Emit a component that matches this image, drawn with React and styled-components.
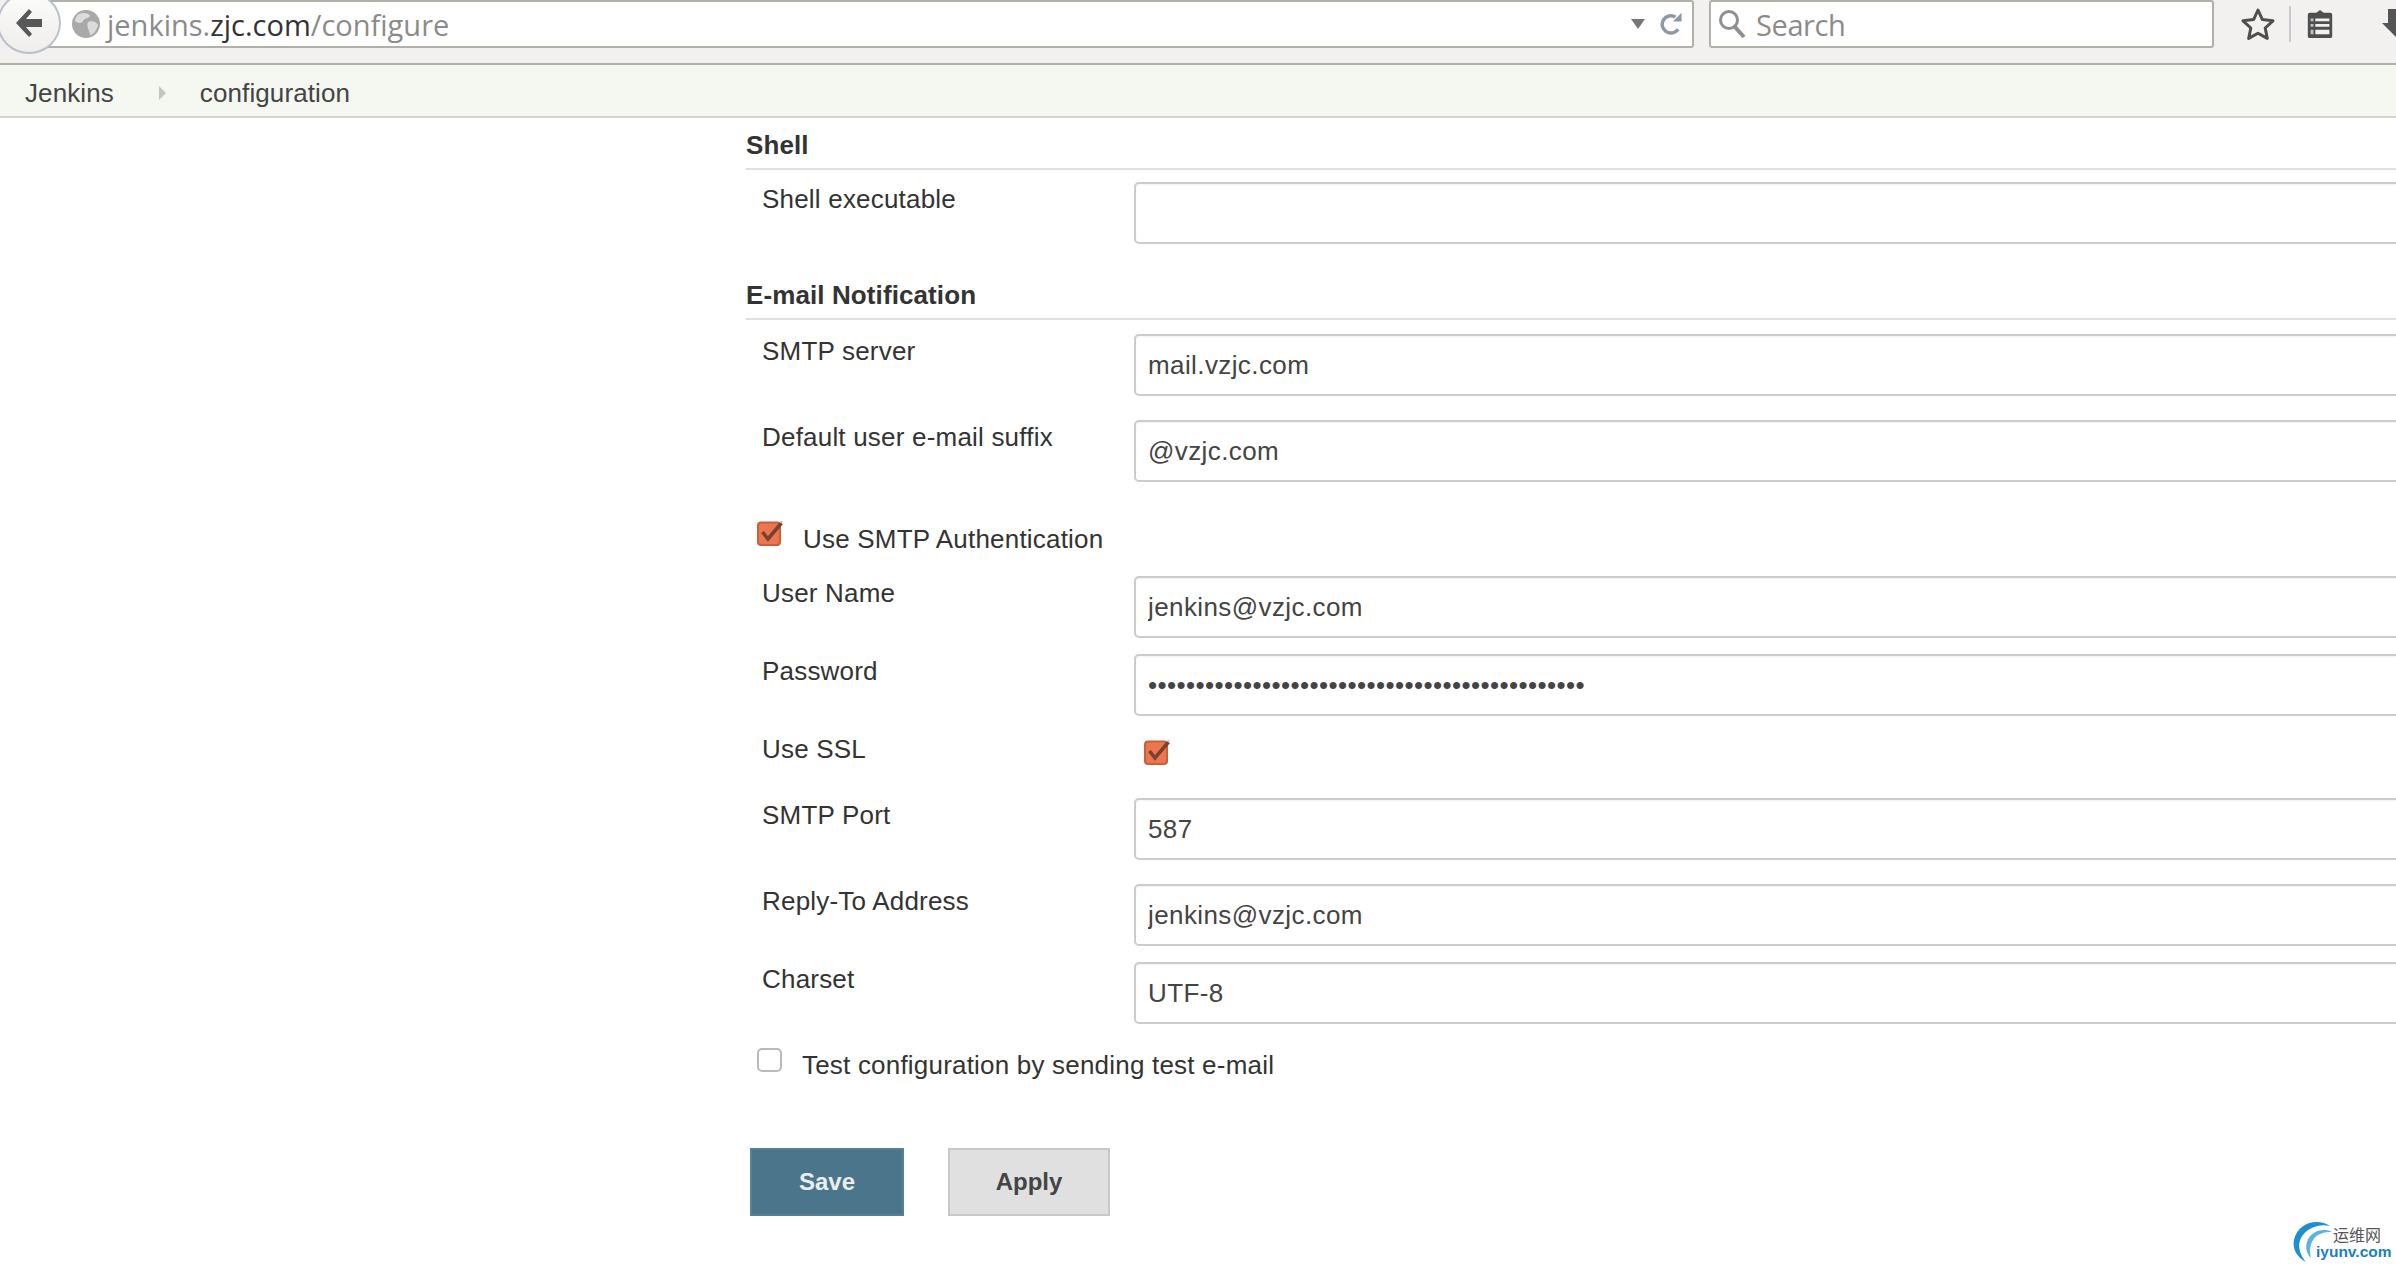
import React from "react"
import styled, { createGlobalStyle } from "styled-components"

const GlobalStyle = createGlobalStyle`
  html, body {
    margin: 0;
    padding: 0;
    background: #fff;
    overflow: hidden;
  }
  * { box-sizing: border-box; }
`

const Page = styled.div`
  position: relative;
  width: 2396px;
  height: 1268px;
  overflow: hidden;
  font-family: "Liberation Sans", Arial, sans-serif;
  font-size: 26px;
  letter-spacing: 0.2px;
  color: #333;
`

const Toolbar = styled.div`
  position: relative;
  display: flex;
  align-items: flex-start;
  height: 65px;
  padding-left: 30px;
  overflow: hidden;
  background: #f2f1ef;
  border-bottom: 2px solid #b3afa9;
`

const BackButton = styled.div`
  position: absolute;
  left: -3px;
  top: -8px;
  width: 64px;
  height: 62px;
  display: flex;
  align-items: center;
  justify-content: center;
  border-radius: 50%;
  background: linear-gradient(#fbfbfa, #efeeec);
  border: 2px solid #b9c1cc;
`

const Box = styled.div`
  display: flex;
  flex: none;
  align-items: center;
  height: 48px;
  background: #fff;
  border: 2px solid #b3afa9;
  border-radius: 0 3px 3px 0;
`

const UrlBar = styled(Box)`
  width: 1664px;
  padding: 0 8px 0 41px;
  border-left: none;
`

const SearchBar = styled(Box)`
  width: 505px;
  margin-left: 15px;
  padding-left: 7px;
  border-radius: 3px;
`

const BarText = styled.span`
  font-family: "Open Sans", "Noto Sans", sans-serif;
  font-size: 29px;
  letter-spacing: ${(p) => p.$spacing || 0}px;
  color: ${(p) => p.$color || "#8b8b8b"};
`

const UrlText = styled.div`
  flex: 1;
  margin-left: 6px;
  white-space: nowrap;
`

const ReloadGap = styled.span`
  width: 14px;
`

const SearchLabel = styled(BarText)`
  margin-left: 10px;
`

const ToolIcons = styled.div`
  display: flex;
  flex: none;
  align-items: center;
  height: 48px;
  margin-left: 27px;
`

const Separator = styled.div`
  width: 2px;
  height: 36px;
  margin: 0 15px 0 14px;
  background: #c7cbd1;
`

const Breadcrumbs = styled.div`
  display: flex;
  align-items: center;
  height: 53px;
  padding: 5px 0 0 25px;
  background: #f5f8f1;
  border-bottom: 2px solid #d3d3d0;
  letter-spacing: 0.1px;
  color: #444;
`

const CrumbArrow = styled.span`
  width: 0;
  height: 0;
  margin: 0 34px 0 45px;
  border-left: 7px solid #c4c4c4;
  border-top: 7px solid transparent;
  border-bottom: 7px solid transparent;
`

const Form = styled.form`
  width: 1700px;
  margin-left: 746px;
  padding-top: 12px;
`

const SectionTitle = styled.div`
  margin-top: ${(p) => p.$top || 0}px;
  padding-bottom: 8px;
  border-bottom: 2px solid #e0e0e0;
  font-weight: bold;
  line-height: 30px;
  letter-spacing: 0.1px;
`

const Row = styled.div`
  display: grid;
  grid-template-columns: 372px 1fr;
  margin-top: ${(p) => p.$top}px;
  padding-left: 16px;
`

const Label = styled.label`
  padding-top: 2px;
  line-height: 30px;
`

const TextBox = styled.input`
  display: block;
  width: 100%;
  height: 62px;
  padding: 0 12px;
  background: #fff;
  border: 2px solid #ccc;
  border-radius: 5px;
  box-shadow: inset 0 1px 2px rgba(0, 0, 0, 0.06);
  font-family: "Liberation Sans", Arial, sans-serif;
  font-size: 26px;
  letter-spacing: 0.4px;
  color: #444;
  outline: none;
`

const CheckLine = styled.div`
  display: flex;
  align-items: flex-start;
  gap: 20px;
  margin-top: ${(p) => p.$top}px;
  padding-left: 11px;
`

const CheckText = styled.span`
  padding-top: ${(p) => p.$pad}px;
  line-height: 30px;
`

const CheckCell = styled.div`
  padding: 8px 0 0 10px;
`

const CheckMark = styled.svg`
  display: block;
  flex: none;
  width: 26px;
  height: 25px;
`

const EmptyBox = styled.span`
  display: block;
  flex: none;
  width: 25px;
  height: 24px;
  background: #fff;
  border: 2px solid #b9b9b9;
  border-radius: 5px;
`

const Buttons = styled.div`
  display: flex;
  gap: 44px;
  margin-top: 68px;
  padding-left: 4px;
`

const Button = styled.button`
  width: ${(p) => (p.$primary ? 154 : 162)}px;
  height: 68px;
  padding: 0;
  background: ${(p) => (p.$primary ? "#4b758b" : "#e0e0e0")};
  border: 2px solid ${(p) => (p.$primary ? "#55809a" : "#c8c8c8")};
  font-family: "Liberation Sans", Arial, sans-serif;
  font-size: 24px;
  font-weight: bold;
  color: ${(p) => (p.$primary ? "#e8eef1" : "#444")};
`

const Watermark = styled.div`
  position: absolute;
  left: 2292px;
  top: 1220px;
  width: 102px;
  height: 44px;
  letter-spacing: 0;
`

const WatermarkCn = styled.span`
  position: absolute;
  left: 41px;
  top: 5px;
  font-family: "Noto Sans CJK SC", sans-serif;
  font-size: 16px;
  line-height: 18px;
  color: #555;
`

const WatermarkEn = styled.span`
  position: absolute;
  left: 24px;
  top: 23px;
  font-family: "Liberation Sans", Arial, sans-serif;
  font-size: 15.5px;
  font-weight: bold;
  line-height: 18px;
  color: #1b7fc4;
`

const Checked = () => (
  <CheckMark viewBox="0 0 26 25">
    <rect x="1" y="1.5" width="22" height="22.5" rx="3" fill="#ec7650" stroke="#c8603a" strokeWidth="2" />
    <path d="M5.5 11 L11 18 L24.5 2" fill="none" stroke="#7a4030" strokeWidth="3.5" />
    <path d="M23 0.5 L25.5 1.5" stroke="#d8c2b8" strokeWidth="2" />
  </CheckMark>
)

const BackArrow = () => (
  <svg width="28" height="30" viewBox="0 0 28 30">
    <path d="M14 1 L1 15 L14 29 L17 26 L11 19 H27 V11 H11 L17 4 Z" fill="#585858" />
  </svg>
)

const Globe = () => (
  <svg width="30" height="30" viewBox="0 0 30 30">
    <circle cx="15" cy="15" r="14" fill="#a9a9a9" />
    <path d="M8 5 C13 3 18 4 19 7 C17 10 13 9 12 12 C11 15 6 14 4 12 C4 9 6 6 8 5 Z" fill="#dcdcdc" />
    <path d="M17 13 C21 11 26 13 27 16 C26 21 22 26 19 26 C19 22 15 18 17 13 Z" fill="#dcdcdc" />
  </svg>
)

const Dropmarker = () => (
  <svg width="16" height="12" viewBox="0 0 16 12">
    <path d="M1 1 H15 L8 11 Z" fill="#777" />
  </svg>
)

const Reload = () => (
  <svg width="24" height="26" viewBox="0 0 26 30">
    <path d="M20 21 A10 10 0 1 1 17 7" fill="none" stroke="#8d9aa6" strokeWidth="4" />
    <path d="M14 12 L24 12 L24 2 Z" fill="#8d9aa6" />
  </svg>
)

const SearchGlass = () => (
  <svg width="28" height="30" viewBox="0 0 28 30">
    <circle cx="11" cy="11" r="8.5" fill="none" stroke="#8f8f8f" strokeWidth="3" />
    <path d="M17 18 L26 28" stroke="#8f8f8f" strokeWidth="4" />
  </svg>
)

const Star = () => (
  <svg width="34" height="32" viewBox="0 0 34 32">
    <path d="M17 2 L21.4 11.6 L32 12.8 L24.2 20 L26.3 30.4 L17 25.2 L7.7 30.4 L9.8 20 L2 12.8 L12.6 11.6 Z" fill="none" stroke="#4f4f4f" strokeWidth="3" strokeLinejoin="round" />
  </svg>
)

const Clipboard = () => (
  <svg width="28" height="30" viewBox="0 0 28 32">
    <path d="M10 4 L14 1 L18 4 H25 Q27 4 27 6 V29 Q27 31 25 31 H3 Q1 31 1 29 V6 Q1 4 3 4 Z" fill="#4f4f4f" />
    <path d="M9 10 H24 V13 H9 Z M9 16 H24 V19 H9 Z M9 22 H24 V27 H9 Z" fill="#f2f1ef" />
    <path d="M4 10 H7 V13 H4 Z M4 16 H7 V19 H4 Z M4 22 H7 V27 H4 Z" fill="#c4c4c4" />
  </svg>
)

const DownloadIcon = styled.svg`
  flex: none;
  margin-left: 48px;
`

const Download = () => (
  <DownloadIcon width="32" height="30" viewBox="0 0 32 30">
    <path d="M6 0 H26 V14 H32 L16 30 L0 14 H6 Z" fill="#555" />
  </DownloadIcon>
)

const SwirlIcon = styled.svg`
  position: absolute;
  left: 0;
  top: 0;
`

const Swirl = () => (
  <SwirlIcon width="44" height="44" viewBox="0 0 44 44">
    <path d="M38 6 C26 -2 6 2 2 20 C0 30 6 38 14 42 C8 35 5 26 9 18 C14 8 27 3 38 6 Z" fill="#1b8fd0" />
    <path d="M40 12 C30 7 18 12 15 22 C13 28 15 34 19 38 C17 30 18 21 25 15.5 C30 12.5 35 11.5 40 12 Z" fill="#58b4e6" />
  </SwirlIcon>
)

const App = () => {
  return (
    <Page>
      <GlobalStyle />
      <Toolbar>
        <BackButton>
          <BackArrow />
        </BackButton>
        <UrlBar>
          <Globe />
          <UrlText>
            <BarText>jenkins.</BarText>
            <BarText $color="#333">zjc.com</BarText>
            <BarText>/configure</BarText>
          </UrlText>
          <Dropmarker />
          <ReloadGap />
          <Reload />
        </UrlBar>
        <SearchBar>
          <SearchGlass />
          <SearchLabel $spacing={-0.4}>Search</SearchLabel>
        </SearchBar>
        <ToolIcons>
          <Star />
          <Separator />
          <Clipboard />
          <Download />
        </ToolIcons>
      </Toolbar>
      <Breadcrumbs>
        <span>Jenkins</span>
        <CrumbArrow />
        <span>configuration</span>
      </Breadcrumbs>
      <Form>
        <SectionTitle>Shell</SectionTitle>
        <Row $top={12}>
          <Label>Shell executable</Label>
          <TextBox readOnly value="" />
        </Row>
        <SectionTitle $top={36}>E-mail Notification</SectionTitle>
        <Row $top={14}>
          <Label>SMTP server</Label>
          <TextBox readOnly value="mail.vzjc.com" />
        </Row>
        <Row $top={24}>
          <Label>Default user e-mail suffix</Label>
          <TextBox readOnly value="@vzjc.com" />
        </Row>
        <CheckLine $top={39}>
          <Checked />
          <CheckText $pad={3}>Use SMTP Authentication</CheckText>
        </CheckLine>
        <Row $top={22}>
          <Label>User Name</Label>
          <TextBox readOnly value="jenkins@vzjc.com" />
        </Row>
        <Row $top={16}>
          <Label>Password</Label>
          <TextBox readOnly type="password" value={"x".repeat(46)} />
        </Row>
        <Row $top={16}>
          <Label>Use SSL</Label>
          <CheckCell>
            <Checked />
          </CheckCell>
        </Row>
        <Row $top={33}>
          <Label>SMTP Port</Label>
          <TextBox readOnly value="587" />
        </Row>
        <Row $top={24}>
          <Label>Reply-To Address</Label>
          <TextBox readOnly value="jenkins@vzjc.com" />
        </Row>
        <Row $top={16}>
          <Label>Charset</Label>
          <TextBox readOnly value="UTF-8" />
        </Row>
        <CheckLine $top={24}>
          <EmptyBox />
          <CheckText $pad={2}>Test configuration by sending test e-mail</CheckText>
        </CheckLine>
        <Buttons>
          <Button type="button" $primary>Save</Button>
          <Button type="button">Apply</Button>
        </Buttons>
      </Form>
      <Watermark>
        <Swirl />
        <WatermarkCn>运维网</WatermarkCn>
        <WatermarkEn>iyunv.com</WatermarkEn>
      </Watermark>
    </Page>
  )
}

export default App
